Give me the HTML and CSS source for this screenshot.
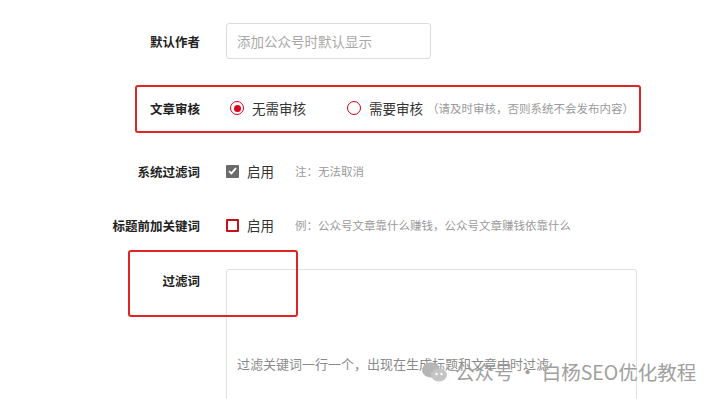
FILE: index.html
```html
<!DOCTYPE html>
<html lang="zh-CN">
<head>
  <meta charset="UTF-8">
  <meta name="viewport" content="width=device-width, initial-scale=1.0">
  <title>文章设置</title>
  <link rel="stylesheet" href="styles.css">
</head>
<body>
  <div class="page">
    <form class="settings">
      <div class="row row-author">
        <label class="label">默认作者</label>
        <input class="text-input" type="text" placeholder="添加公众号时默认显示">
      </div>

      <div class="row row-audit">
        <label class="label">文章审核</label>
        <div class="options">
          <span class="radio checked"></span><span class="opt-text">无需审核</span>
          <span class="radio second"></span><span class="opt-text">需要审核</span>
          <span class="note">（请及时审核，否则系统不会发布内容）</span>
        </div>
      </div>

      <div class="row row-filter">
        <label class="label">系统过滤词</label>
        <div class="options">
          <span class="check on">
            <svg width="9" height="8" viewBox="0 0 9 8"><path d="M1 4.2 L3.4 6.4 L8 1.2" fill="none" stroke="#fff" stroke-width="1.8"/></svg>
          </span><span class="opt-text">启用</span>
          <span class="note gap">注：无法取消</span>
        </div>
      </div>

      <div class="row row-prefix">
        <label class="label">标题前加关键词</label>
        <div class="options">
          <span class="check off"></span><span class="opt-text">启用</span>
          <span class="note gap">例：公众号文章靠什么赚钱，公众号文章赚钱依靠什么</span>
        </div>
      </div>

      <div class="row row-words">
        <label class="label top">过滤词</label>
        <textarea class="text-area" placeholder="过滤关键词一行一个，出现在生成标题和文章中时过滤"></textarea>
      </div>
    </form>

    <div class="mark mark-audit"></div>
    <div class="mark mark-words"></div>

    <div class="watermark">
      <svg width="28" height="22" viewBox="0 0 28 22">
        <ellipse cx="10" cy="9" rx="9" ry="7.5" fill="#b5b5b5"/>
        <ellipse cx="18" cy="14" rx="8" ry="6.5" fill="#c4c4c4"/>
        <circle cx="15.5" cy="13" r="1.2" fill="#fff"/>
        <circle cx="20.5" cy="13" r="1.2" fill="#fff"/>
      </svg>
      <span>公众号 · 白杨SEO优化教程</span>
    </div>
  </div>
</body>
</html>
```

FILE: styles.css
```css
* { margin: 0; padding: 0; box-sizing: border-box; }
body { background: #fff; color: #333; font-family: "Noto Sans CJK SC", "Microsoft YaHei", sans-serif; font-size: 13px; overflow: hidden; }

.page { position: relative; width: 720px; height: 399px; overflow: hidden; }

.settings { display: flex; flex-direction: column; padding-top: 23px; }
.row { display: flex; align-items: center; height: 36px; }
.row-audit { margin-top: 31px; }
.row-filter { margin-top: 27px; }
.row-prefix { margin-top: 18px; }
.row-words { margin-top: 26px; align-items: flex-start; height: 130px; }

.label { width: 200px; text-align: right; font-weight: bold; font-size: 12.5px; color: #222; margin-right: 26px; flex-shrink: 0; }
.label.top { margin-top: 2px; line-height: 20px; }

.text-input { width: 205px; height: 36px; border: 1px solid #dcdcdc; border-radius: 3px; padding: 0 10px; font: inherit; font-size: 13.5px; color: #333; outline: none; }
.text-input::placeholder { color: #a8a8a8; }

.text-area { width: 411px; height: 130px; border: 1px solid #e2e2e2; border-bottom: none; border-radius: 3px 3px 0 0; padding: 84px 10px 10px; font: inherit; font-size: 13px; resize: none; outline: none; }
.text-area::placeholder { color: #8a8a8a; }

.options { display: flex; align-items: center; }
.opt-text { font-size: 13.5px; color: #333; margin-left: 8px; }
.note { font-size: 11.5px; color: #9a9a9a; margin-left: 4px; }
.note.gap { margin-left: 21px; }

.radio { width: 14px; height: 14px; border: 1.5px solid #d9001b; border-radius: 50%; margin-left: 4px; display: inline-flex; align-items: center; justify-content: center; }
.radio.checked::after { content: ""; width: 7px; height: 7px; border-radius: 50%; background: #d9001b; }
.radio.second { margin-left: 41px; }

.check { width: 13px; height: 13px; display: inline-flex; align-items: center; justify-content: center; border-radius: 1px; }
.check.on { background: #6b6b6b; }
.check.off { border: 2px solid #c4121b; }

.mark { position: absolute; border: 2px solid #e02424; border-radius: 3px; }
.mark-audit { left: 135px; top: 85px; width: 506px; height: 48px; }
.mark-words { left: 128px; top: 250px; width: 170px; height: 67px; }

.watermark { position: absolute; left: 421px; top: 357px; display: flex; align-items: center; gap: 6px; color: #a0a0a0; font-size: 19.5px; }
```
